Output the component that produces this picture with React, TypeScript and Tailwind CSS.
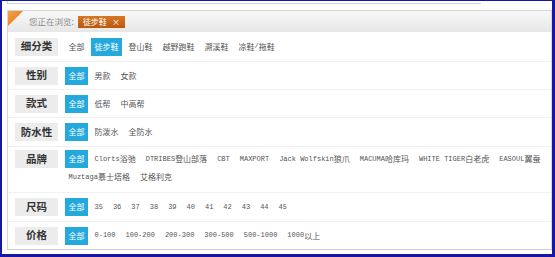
import React from "react";

type Row = {
  label: string;
  options: string[];
  selected: number;
  h: string;
  wrap?: boolean;
  last?: boolean;
};

const rows: Row[] = [
  {
    label: "细分类",
    options: ["全部", "徒步鞋", "登山鞋", "越野跑鞋", "溯溪鞋", "凉鞋/拖鞋"],
    selected: 1,
    h: "h-[30px]",
  },
  { label: "性别", options: ["全部", "男款", "女款"], selected: 0, h: "h-[28px]" },
  { label: "款式", options: ["全部", "低帮", "中高帮"], selected: 0, h: "h-[28px]" },
  { label: "防水性", options: ["全部", "防泼水", "全防水"], selected: 0, h: "h-[29px]" },
  {
    label: "品牌",
    options: [
      "全部",
      "Clorts浴弛",
      "DTRIBES登山部落",
      "CBT",
      "MAXPORT",
      "Jack Wolfskin狼爪",
      "MACUMA哈库玛",
      "WHITE TIGER白老虎",
      "EASOUL翼蚕",
      "Muztaga慕士塔格",
      "艾格利克",
    ],
    selected: 0,
    h: "h-[46px]",
    wrap: true,
  },
  {
    label: "尺码",
    options: ["全部", "35", "36", "37", "38", "39", "40", "41", "42", "43", "44", "45"],
    selected: 0,
    h: "h-[29px]",
  },
  {
    label: "价格",
    options: ["全部", "0-100", "100-200", "200-300", "300-500", "500-1000", "1000以上"],
    selected: 0,
    h: "h-[27px]",
    last: true,
  },
];

// latin runs get the narrow mono face, like the old SimSun page
function Mixed({ text }: { text: string }) {
  const parts = text.split(/([\x20-\x7e]+)/).filter(Boolean);
  return (
    <>
      {parts.map((p, i) =>
        /^[\x20-\x7e]+$/.test(p) ? (
          <span key={i} className="font-['Liberation_Mono',monospace] text-[7px] whitespace-pre">
            {p}
          </span>
        ) : (
          <span key={i}>{p}</span>
        )
      )}
    </>
  );
}

function FilterRow({ row }: { row: Row }) {
  return (
    <div
      className={`flex ${row.h} ${row.wrap ? "items-start pt-[3px]" : "items-center"} ${
        row.last ? "" : "border-b border-[#f1f1f1]"
      }`}
    >
      <div className="ml-[7px] w-[43px] h-[18px] shrink-0 bg-[#ececec] flex items-center justify-center text-[10.5px] font-bold text-[#333] leading-none">
        {row.label}
      </div>
      <div className="ml-[7px] flex flex-wrap items-center gap-x-[3px] pr-[2px]">
        {row.options.map((opt, i) => (
          <span
            key={opt}
            className={`h-[18px] px-[3.5px] flex items-center text-[8px] whitespace-nowrap ${
              i === row.selected ? "bg-[#25a9dd] text-white" : "text-[#555]"
            }`}
          >
            <Mixed text={opt} />
          </span>
        ))}
      </div>
    </div>
  );
}

export default function App() {
  return (
    <div className="w-[555px] h-[257px] bg-white border-[#1717a6] border-t border-l-2 border-r-[3px] border-b-[3px] font-['Noto_Sans_CJK_SC',sans-serif] overflow-hidden">
      <div className="ml-[5px] w-[474px] h-[3px] border-l border-b border-[#cad2da]" />
      <div className="mt-[6px] ml-[5px] border border-[#d6d6d6] border-b-[#cdcdcd]">
        <div className="flex h-[21px] bg-linear-to-b from-[#f8f8f8] to-[#e7e7e7]">
          <svg width="15" height="15" viewBox="0 0 15 15" className="shrink-0">
            <defs>
              <linearGradient id="tri" x1="0" y1="0" x2="1" y2="1">
                <stop offset="0" stopColor="#f6a24a" />
                <stop offset="1" stopColor="#e46c08" />
              </linearGradient>
            </defs>
            <polygon points="0,0 15,0 0,15" fill="url(#tri)" />
          </svg>
          <div className="ml-[6px] flex items-center">
            <span className="text-[8.5px] text-[#8a8a8a]">您正在浏览:</span>
            <span className="ml-[4px] h-[12px] px-[5px] flex items-center gap-[5px] bg-linear-to-b from-[#d57822] to-[#b9580f] text-white text-[8px] leading-none">
              <span>徒步鞋</span>
              <span className="text-[8px]">×</span>
            </span>
          </div>
        </div>
        {rows.map((r) => (
          <FilterRow key={r.label} row={r} />
        ))}
      </div>
    </div>
  );
}
